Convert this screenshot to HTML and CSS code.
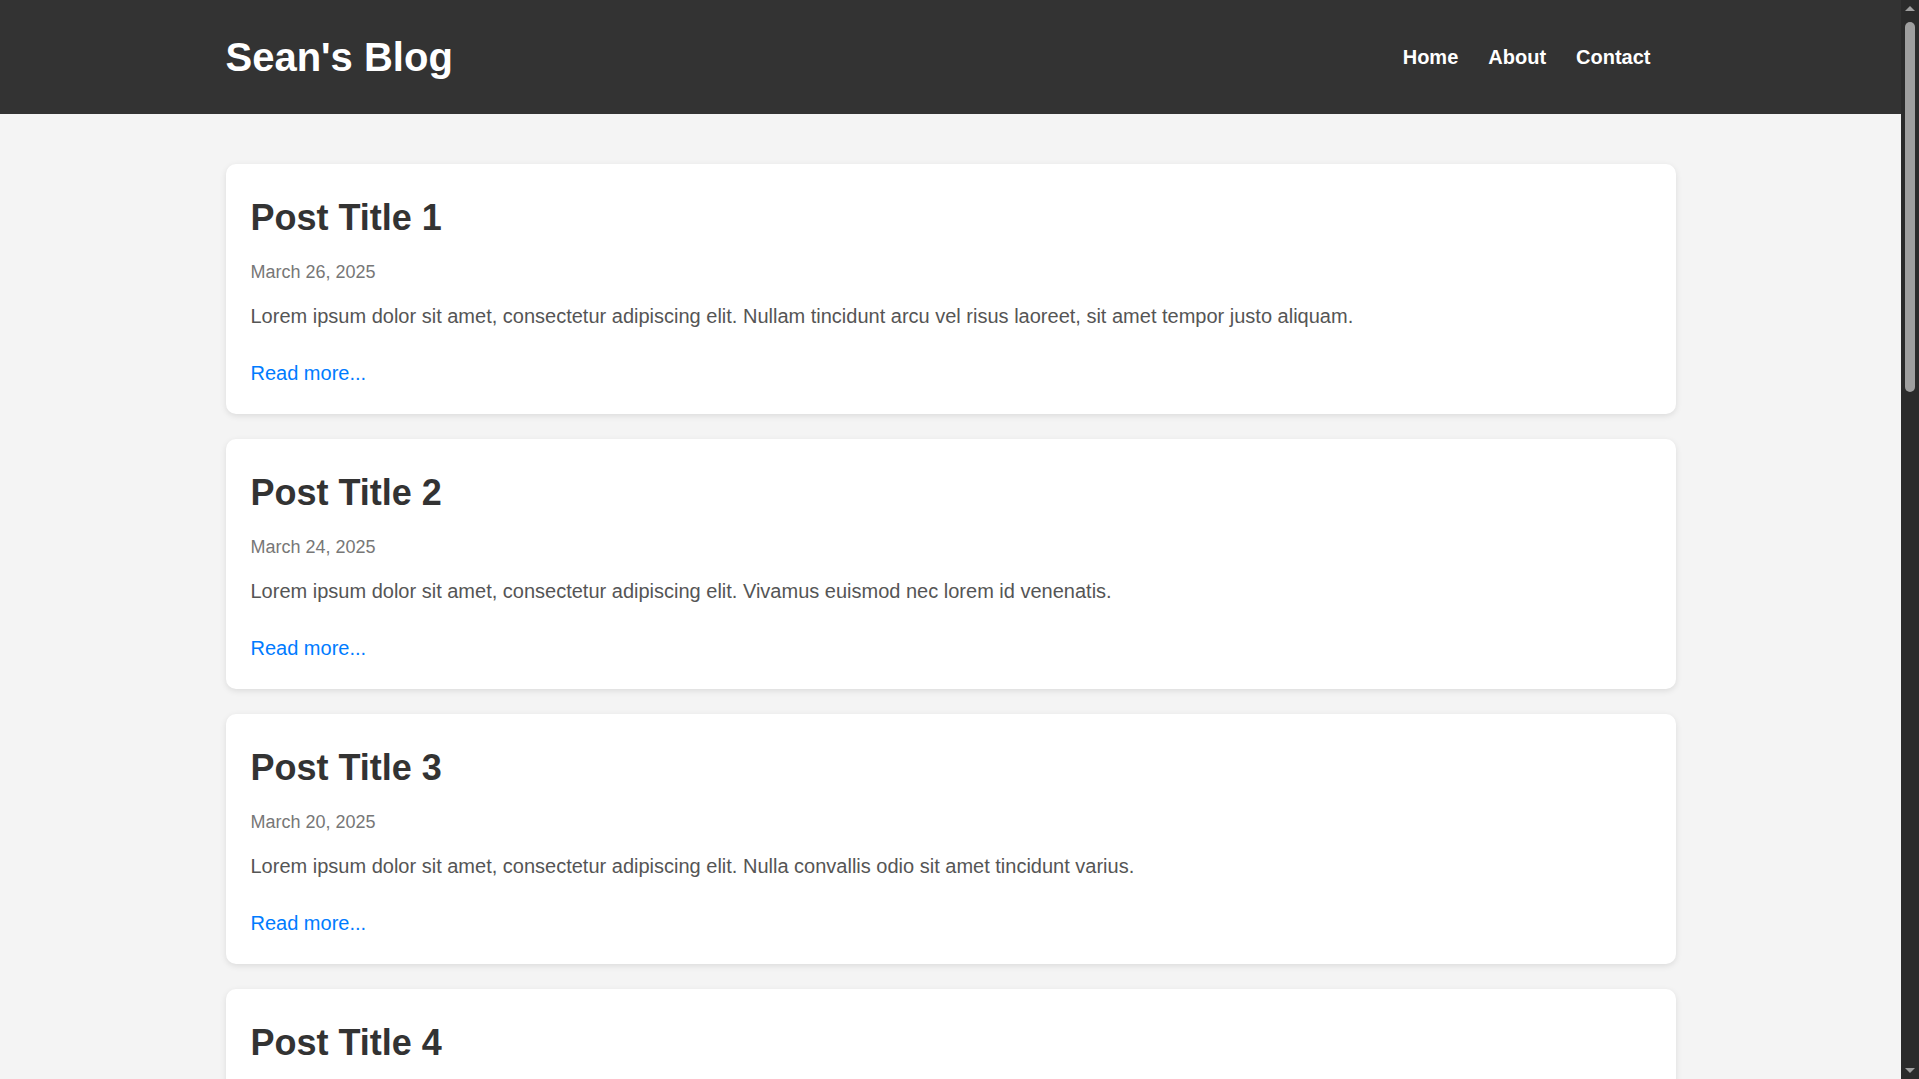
FILE: index.html
```html
<!DOCTYPE html>
<html lang="en">
<head>
<meta charset="utf-8">
<title>Sean's Blog</title>
<link rel="stylesheet" href="styles.css">
</head>
<body>
<header class="site-header">
  <div class="container header-inner">
    <h1 class="logo">Sean's Blog</h1>
    <nav class="nav">
      <a href="#" class="nav-link">Home</a>
      <a href="#" class="nav-link">About</a>
      <a href="#" class="nav-link">Contact</a>
    </nav>
  </div>
</header>
<main class="container posts">
  <article class="post">
    <h2 class="post-title">Post Title 1</h2>
    <p class="post-date">March 26, 2025</p>
    <p class="post-excerpt">Lorem ipsum dolor sit amet, consectetur adipiscing elit. Nullam tincidunt arcu vel risus laoreet, sit amet tempor justo aliquam.</p>
    <a href="#" class="read-more">Read more...</a>
  </article>
  <article class="post">
    <h2 class="post-title">Post Title 2</h2>
    <p class="post-date">March 24, 2025</p>
    <p class="post-excerpt">Lorem ipsum dolor sit amet, consectetur adipiscing elit. Vivamus euismod nec lorem id venenatis.</p>
    <a href="#" class="read-more">Read more...</a>
  </article>
  <article class="post">
    <h2 class="post-title">Post Title 3</h2>
    <p class="post-date">March 20, 2025</p>
    <p class="post-excerpt">Lorem ipsum dolor sit amet, consectetur adipiscing elit. Nulla convallis odio sit amet tincidunt varius.</p>
    <a href="#" class="read-more">Read more...</a>
  </article>
  <article class="post">
    <h2 class="post-title">Post Title 4</h2>
    <p class="post-date">March 15, 2025</p>
    <p class="post-excerpt">Lorem ipsum dolor sit amet, consectetur adipiscing elit. Sed posuere consectetur est at lobortis.</p>
    <a href="#" class="read-more">Read more...</a>
  </article>
  <article class="post">
    <h2 class="post-title">Post Title 5</h2>
    <p class="post-date">March 10, 2025</p>
    <p class="post-excerpt">Lorem ipsum dolor sit amet, consectetur adipiscing elit. Donec ullamcorper nulla non metus auctor fringilla.</p>
    <a href="#" class="read-more">Read more...</a>
  </article>
  <article class="post">
    <h2 class="post-title">Post Title 6</h2>
    <p class="post-date">March 5, 2025</p>
    <p class="post-excerpt">Lorem ipsum dolor sit amet, consectetur adipiscing elit. Cras mattis consectetur purus sit amet fermentum.</p>
    <a href="#" class="read-more">Read more...</a>
  </article>
  <article class="post">
    <h2 class="post-title">Post Title 7</h2>
    <p class="post-date">February 28, 2025</p>
    <p class="post-excerpt">Lorem ipsum dolor sit amet, consectetur adipiscing elit. Maecenas faucibus mollis interdum.</p>
    <a href="#" class="read-more">Read more...</a>
  </article>
  <article class="post">
    <h2 class="post-title">Post Title 8</h2>
    <p class="post-date">February 20, 2025</p>
    <p class="post-excerpt">Lorem ipsum dolor sit amet, consectetur adipiscing elit. Aenean lacinia bibendum nulla sed consectetur.</p>
    <a href="#" class="read-more">Read more...</a>
  </article>
</main>
<div class="scrollbar" aria-hidden="true">
  <span class="scroll-arrow scroll-up"></span>
  <span class="scroll-thumb"></span>
  <span class="scroll-arrow scroll-down"></span>
</div>
</body>
</html>
```

FILE: styles.css
```css
* {
  box-sizing: border-box;
}

html {
  scrollbar-width: none;
}
html::-webkit-scrollbar {
  display: none;
}

body {
  margin: 0;
  padding-right: 18px;
  font-family: "Liberation Sans", Arial, sans-serif;
  line-height: 1.6;
  background: #f4f4f4;
  color: #333;
}

.container {
  max-width: 1450px;
  margin: 0 auto;
}

.site-header {
  background: #333;
  color: #fff;
  padding: 25px 0;
}

.header-inner {
  display: flex;
  align-items: center;
  justify-content: space-between;
}

.logo {
  margin: 0;
  font-size: 40px;
  font-weight: bold;
  line-height: 64px;
}

.nav {
  display: flex;
  gap: 30px;
  padding-right: 25px;
}

.nav-link {
  color: #fff;
  text-decoration: none;
  font-weight: bold;
  font-size: 20px;
  line-height: 32px;
}

.posts {
  padding: 50px 0;
  display: flex;
  flex-direction: column;
  gap: 25px;
}

.post {
  background: #fff;
  border-radius: 10px;
  padding: 25px;
  box-shadow: 0 2px 6px rgba(0, 0, 0, 0.1);
}

.post-title {
  margin: 1px 0 12px;
  font-size: 36px;
  line-height: 56px;
  color: #333;
}

.post-date {
  margin: 0 0 14px;
  font-size: 18px;
  line-height: 28px;
  color: #777;
}

.post-excerpt {
  margin: 0 0 25px;
  font-size: 20px;
  line-height: 32px;
  color: #555;
}

.read-more {
  display: inline-block;
  font-size: 20px;
  line-height: 32px;
  color: #007bff;
  text-decoration: none;
}

/* fake classic scrollbar, overlaid on the right edge */
.scrollbar {
  position: fixed;
  top: 0;
  right: 0;
  width: 18px;
  height: 100vh;
  background: #2b2b2b;
}

.scroll-thumb {
  position: absolute;
  top: 22px;
  left: 4px;
  width: 10px;
  height: 370px;
  background: #9f9f9f;
  border-radius: 5px;
}

.scroll-arrow {
  position: absolute;
  left: 4px;
  width: 0;
  height: 0;
  border-left: 5px solid transparent;
  border-right: 5px solid transparent;
}

.scroll-up {
  top: 6px;
  border-bottom: 5px solid #9f9f9f;
}

.scroll-down {
  bottom: 6px;
  border-top: 5px solid #9f9f9f;
}
```
